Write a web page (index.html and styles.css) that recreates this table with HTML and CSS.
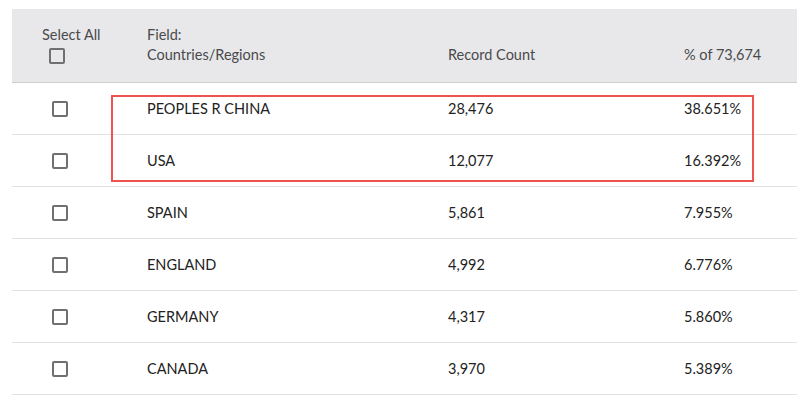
FILE: index.html
```html
<!DOCTYPE html>
<html>
<head>
<meta charset="utf-8">
<link rel="stylesheet" href="styles.css">
</head>
<body>
<div class="table">
  <div class="head">
    <div class="hcell hsel">
      <span>Select All</span>
      <span class="cb hcb"></span>
    </div>
    <div class="hcell hbottom">Field:<br>Countries/Regions</div>
    <div class="hcell hbottom">Record Count</div>
    <div class="hcell hbottom">% of 73,674</div>
  </div>
  <div class="group">
    <div class="row"><div class="c1"><span class="cb"></span></div><div>PEOPLES R CHINA</div><div>28,476</div><div>38.651%</div></div>
    <div class="row"><div class="c1"><span class="cb"></span></div><div>USA</div><div>12,077</div><div>16.392%</div></div>
    <div class="highlight"></div>
  </div>
  <div class="row"><div class="c1"><span class="cb"></span></div><div>SPAIN</div><div>5,861</div><div>7.955%</div></div>
  <div class="row"><div class="c1"><span class="cb"></span></div><div>ENGLAND</div><div>4,992</div><div>6.776%</div></div>
  <div class="row"><div class="c1"><span class="cb"></span></div><div>GERMANY</div><div>4,317</div><div>5.860%</div></div>
  <div class="row"><div class="c1"><span class="cb"></span></div><div>CANADA</div><div>3,970</div><div>5.389%</div></div>
</div>
</body>
</html>
```
FILE: styles.css
```css
html, body {
  margin: 0;
  padding: 0;
  background: #fff;
}
body {
  padding: 9px 0 0 12px;
  font-family: Lato, "Source Sans Pro", "Liberation Sans", sans-serif;
  font-size: 14.5px;
  color: #222;
}
.table {
  width: 785px;
}
.head, .row {
  display: grid;
  grid-template-columns: 135px 301px 236px 1fr;
}
.head {
  background: #e8e8ea;
  border-bottom: 1px solid #cfcfd1;
  height: 73px;
  color: #4a4a4a;
  line-height: 20px;
}
.hcell {
  padding-bottom: 17px;
}
.hsel {
  display: flex;
  flex-direction: column;
  align-items: flex-start;
  padding: 16px 0 0 30px;
}
.hbottom {
  align-self: end;
}
.cb {
  display: block;
  box-sizing: border-box;
  width: 16px;
  height: 16px;
  border: 2px solid #707070;
  border-radius: 2px;
  background: #fff;
}
.hcb {
  margin: 3px 0 0 7px;
  background: transparent;
}
.row {
  height: 51px;
  border-bottom: 1px solid #e2e2e2;
  align-items: center;
}
.c1 {
  padding-left: 40px;
}
.group {
  position: relative;
}
.highlight {
  position: absolute;
  left: 99px;
  top: 12px;
  width: 643px;
  height: 87px;
  box-sizing: border-box;
  border: 2px solid #f05252;
  pointer-events: none;
}
```
